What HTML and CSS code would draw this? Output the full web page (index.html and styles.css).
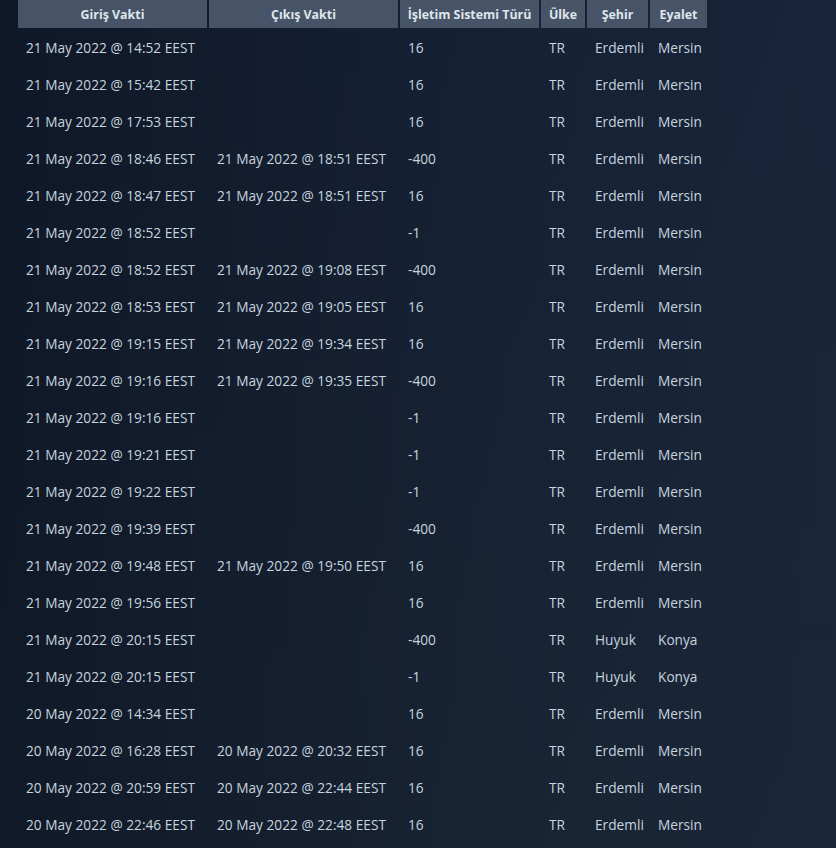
FILE: index.html
```html
<!DOCTYPE html>
<html lang="tr">
<head>
<meta charset="utf-8">
<title>Giriş Geçmişi</title>
<link rel="stylesheet" href="styles.css">
</head>
<body>
<div class="page">
<table class="history">
<colgroup>
<col class="c1"><col class="c2"><col class="c3"><col class="c4"><col class="c5"><col class="c6">
</colgroup>
<thead>
<tr><th>Giriş Vakti</th><th>Çıkış Vakti</th><th>İşletim Sistemi Türü</th><th>Ülke</th><th>Şehir</th><th>Eyalet</th></tr>
</thead>
<tbody>
<tr><td>21 May 2022 @ 14:52 EEST</td><td></td><td>16</td><td>TR</td><td>Erdemli</td><td>Mersin</td></tr>
<tr><td>21 May 2022 @ 15:42 EEST</td><td></td><td>16</td><td>TR</td><td>Erdemli</td><td>Mersin</td></tr>
<tr><td>21 May 2022 @ 17:53 EEST</td><td></td><td>16</td><td>TR</td><td>Erdemli</td><td>Mersin</td></tr>
<tr><td>21 May 2022 @ 18:46 EEST</td><td>21 May 2022 @ 18:51 EEST</td><td>-400</td><td>TR</td><td>Erdemli</td><td>Mersin</td></tr>
<tr><td>21 May 2022 @ 18:47 EEST</td><td>21 May 2022 @ 18:51 EEST</td><td>16</td><td>TR</td><td>Erdemli</td><td>Mersin</td></tr>
<tr><td>21 May 2022 @ 18:52 EEST</td><td></td><td>-1</td><td>TR</td><td>Erdemli</td><td>Mersin</td></tr>
<tr><td>21 May 2022 @ 18:52 EEST</td><td>21 May 2022 @ 19:08 EEST</td><td>-400</td><td>TR</td><td>Erdemli</td><td>Mersin</td></tr>
<tr><td>21 May 2022 @ 18:53 EEST</td><td>21 May 2022 @ 19:05 EEST</td><td>16</td><td>TR</td><td>Erdemli</td><td>Mersin</td></tr>
<tr><td>21 May 2022 @ 19:15 EEST</td><td>21 May 2022 @ 19:34 EEST</td><td>16</td><td>TR</td><td>Erdemli</td><td>Mersin</td></tr>
<tr><td>21 May 2022 @ 19:16 EEST</td><td>21 May 2022 @ 19:35 EEST</td><td>-400</td><td>TR</td><td>Erdemli</td><td>Mersin</td></tr>
<tr><td>21 May 2022 @ 19:16 EEST</td><td></td><td>-1</td><td>TR</td><td>Erdemli</td><td>Mersin</td></tr>
<tr><td>21 May 2022 @ 19:21 EEST</td><td></td><td>-1</td><td>TR</td><td>Erdemli</td><td>Mersin</td></tr>
<tr><td>21 May 2022 @ 19:22 EEST</td><td></td><td>-1</td><td>TR</td><td>Erdemli</td><td>Mersin</td></tr>
<tr><td>21 May 2022 @ 19:39 EEST</td><td></td><td>-400</td><td>TR</td><td>Erdemli</td><td>Mersin</td></tr>
<tr><td>21 May 2022 @ 19:48 EEST</td><td>21 May 2022 @ 19:50 EEST</td><td>16</td><td>TR</td><td>Erdemli</td><td>Mersin</td></tr>
<tr><td>21 May 2022 @ 19:56 EEST</td><td></td><td>16</td><td>TR</td><td>Erdemli</td><td>Mersin</td></tr>
<tr><td>21 May 2022 @ 20:15 EEST</td><td></td><td>-400</td><td>TR</td><td>Huyuk</td><td>Konya</td></tr>
<tr><td>21 May 2022 @ 20:15 EEST</td><td></td><td>-1</td><td>TR</td><td>Huyuk</td><td>Konya</td></tr>
<tr><td>20 May 2022 @ 14:34 EEST</td><td></td><td>16</td><td>TR</td><td>Erdemli</td><td>Mersin</td></tr>
<tr><td>20 May 2022 @ 16:28 EEST</td><td>20 May 2022 @ 20:32 EEST</td><td>16</td><td>TR</td><td>Erdemli</td><td>Mersin</td></tr>
<tr><td>20 May 2022 @ 20:59 EEST</td><td>20 May 2022 @ 22:44 EEST</td><td>16</td><td>TR</td><td>Erdemli</td><td>Mersin</td></tr>
<tr><td>20 May 2022 @ 22:46 EEST</td><td>20 May 2022 @ 22:48 EEST</td><td>16</td><td>TR</td><td>Erdemli</td><td>Mersin</td></tr>
</tbody>
</table>
</div>
</body>
</html>
```
FILE: styles.css
```css
html, body {
  margin: 0;
  padding: 0;
}
body {
  min-height: 848px;
  background:
    linear-gradient(to right, rgba(8, 14, 26, 0.55) 0%, rgba(8, 14, 26, 0.15) 60%, rgba(8, 14, 26, 0) 100%),
    linear-gradient(to bottom, #182439 0%, #1b2738 100%);
  font-family: "Open Sans", "Liberation Sans", sans-serif;
  font-size: 13.7px;
  color: #c6d4df;
}
.page {
  padding: 0 0 0 16px;
}
.history {
  table-layout: fixed;
  width: 693px;
  border-collapse: separate;
  border-spacing: 2px 0;
}
.c1 { width: 189px; }
.c2 { width: 189px; }
.c3 { width: 139px; }
.c4 { width: 44px; }
.c5 { width: 61px; }
.c6 { width: 57px; }
.history th {
  height: 28px;
  padding: 0 2px;
  background: #475467;
  color: #dfe6ec;
  font-size: 12.4px;
  font-weight: 700;
  text-align: center;
  white-space: nowrap;
  vertical-align: middle;
  box-sizing: border-box;
}
.history td {
  height: 37px;
  padding: 2px 0 0 8px;
  text-align: left;
  white-space: nowrap;
  vertical-align: middle;
  box-sizing: border-box;
  overflow: hidden;
}
```
